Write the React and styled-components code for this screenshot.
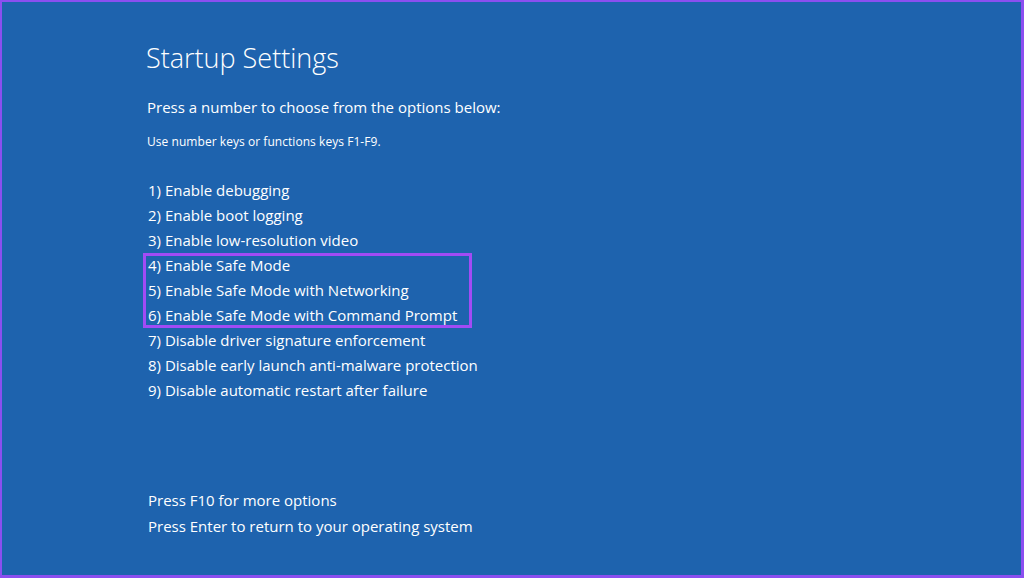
import React from "react";
import styled, { createGlobalStyle } from "styled-components";

const GlobalStyle = createGlobalStyle`
  html, body {
    margin: 0;
    padding: 0;
    background: #1e63ae;
  }
  * {
    box-sizing: border-box;
  }
`;

const Screen = styled.div`
  width: 1024px;
  height: 578px;
  background: #1e63ae;
  border-style: solid;
  border-color: #8b4ff0;
  border-width: 2px 3px 3px 2px;
  padding: 36px 0 0 144px;
  display: flex;
  flex-direction: column;
  font-family: "Open Sans", "Noto Sans", sans-serif;
  color: #ffffff;
`;

const Title = styled.h1`
  margin: 0;
  font-weight: 300;
  font-size: 27px;
  line-height: 40px;
  letter-spacing: 0;
`;

const Lead = styled.p`
  margin: 18px 0 0 1px;
  font-size: 15px;
  line-height: 22px;
`;

const Hint = styled.p`
  margin: 16px 0 0 1px;
  font-size: 12px;
  line-height: 16px;
  letter-spacing: 0.05px;
`;

const OptionList = styled.ol`
  list-style: none;
  margin: 27.5px 0 0 0;
  padding: 0;
  display: flex;
  flex-direction: column;
`;

// a frame drawn inside the group so the rows keep their spacing
const Group = styled.div`
  display: flex;
  flex-direction: column;
  align-self: flex-start;
  margin-left: ${(p) => (p.$marked ? "-3px" : "0")};
  padding: ${(p) => (p.$marked ? "0 15px 0 3px" : "0")};
  outline: ${(p) => (p.$marked ? "3px solid #a24bf5" : "none")};
  outline-offset: -3px;
`;

const Option = styled.li`
  font-size: 15px;
  line-height: 25px;
  padding-left: 2px;
  white-space: nowrap;
`;

const Footer = styled.div`
  margin-top: 84px;
  display: flex;
  flex-direction: column;
`;

const FooterLine = styled.p`
  margin: 0 0 0 2px;
  font-size: 15px;
  line-height: 26px;
`;

const groups = [
  {
    marked: false,
    items: [
      "1) Enable debugging",
      "2) Enable boot logging",
      "3) Enable low-resolution video",
    ],
  },
  {
    marked: true,
    items: [
      "4) Enable Safe Mode",
      "5) Enable Safe Mode with Networking",
      "6) Enable Safe Mode with Command Prompt",
    ],
  },
  {
    marked: false,
    items: [
      "7) Disable driver signature enforcement",
      "8) Disable early launch anti-malware protection",
      "9) Disable automatic restart after failure",
    ],
  },
];

const App = () => {
  return (
    <>
      <GlobalStyle />
      <Screen>
        <Title>Startup Settings</Title>
        <Lead>Press a number to choose from the options below:</Lead>
        <Hint>Use number keys or functions keys F1-F9.</Hint>
        <OptionList>
          {groups.map((group, i) => (
            <Group key={i} $marked={group.marked}>
              {group.items.map((item) => (
                <Option key={item}>{item}</Option>
              ))}
            </Group>
          ))}
        </OptionList>
        <Footer>
          <FooterLine>Press F10 for more options</FooterLine>
          <FooterLine>Press Enter to return to your operating system</FooterLine>
        </Footer>
      </Screen>
    </>
  );
};

export default App;
